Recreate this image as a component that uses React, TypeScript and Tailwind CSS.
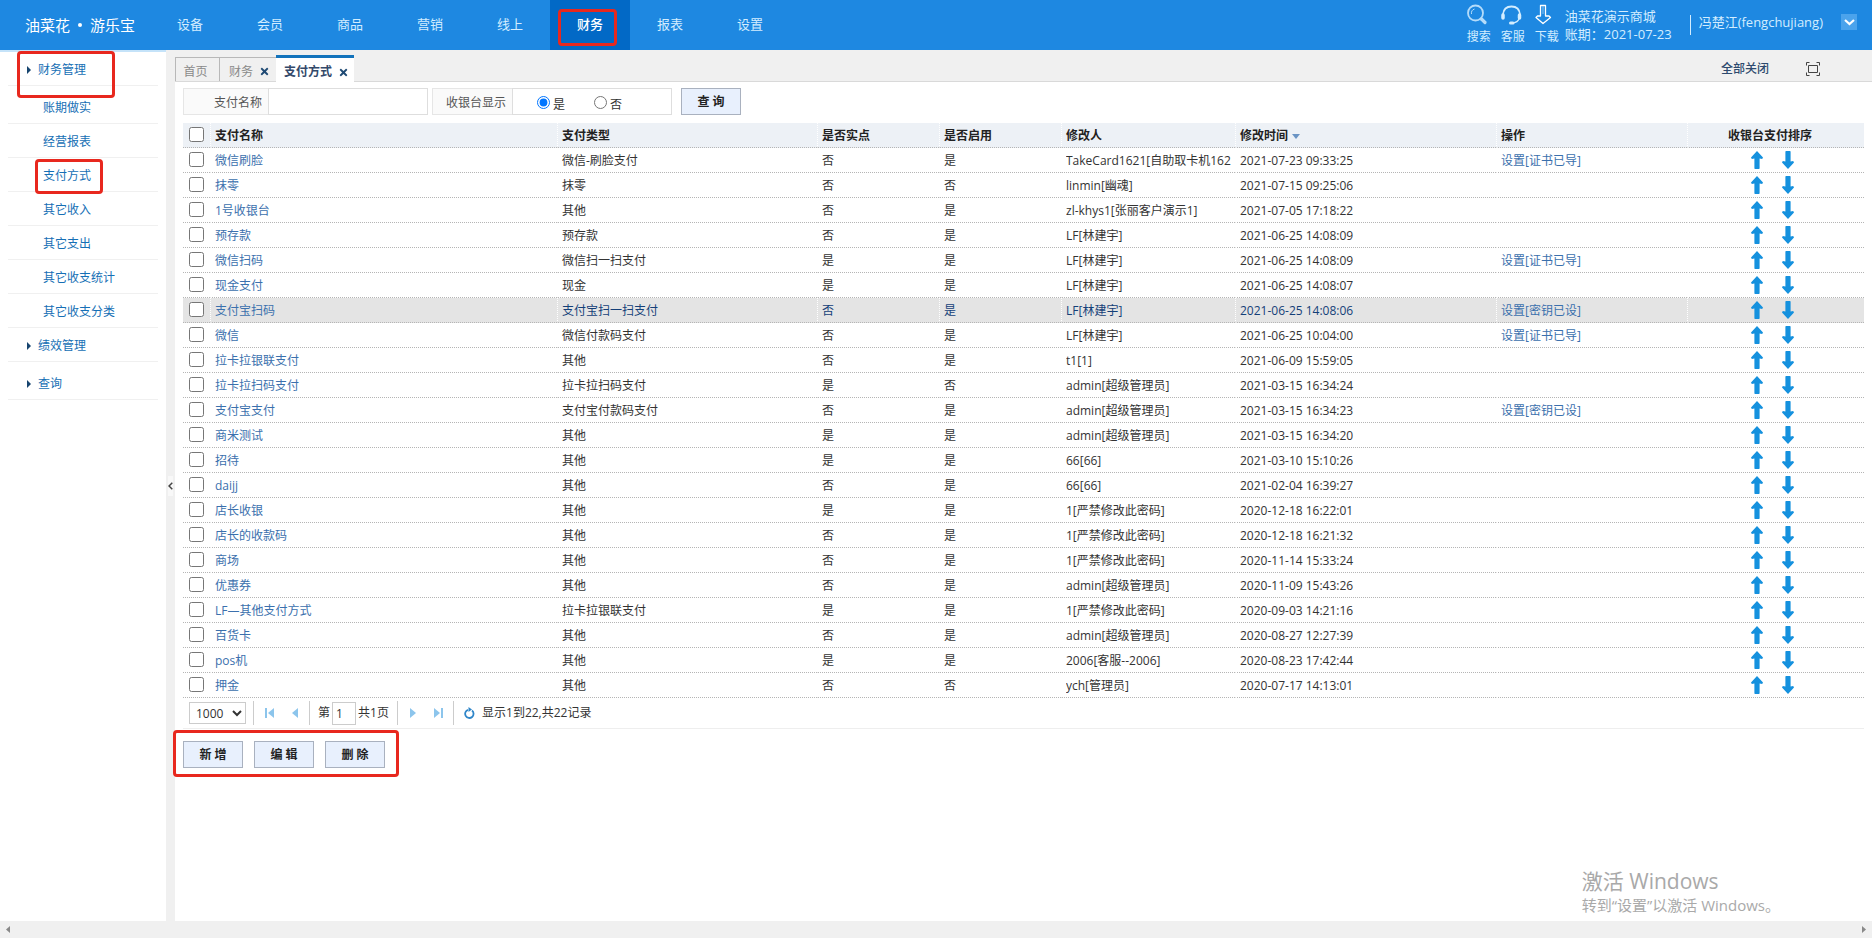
import type { ReactNode } from "react";
import { FaTimes } from "react-icons/fa";

type Row = {
  name: string;
  type: string;
  counted: string;
  enabled: string;
  user: string;
  time: string;
  action?: string;
  active?: boolean;
};

const NAV = ["设备", "会员", "商品", "营销", "线上", "财务", "报表", "设置"];

const MENU = [
  { label: "财务管理", parent: true },
  { label: "账期做实", tall: true },
  { label: "经营报表" },
  { label: "支付方式", marked: true },
  { label: "其它收入" },
  { label: "其它支出" },
  { label: "其它收支统计" },
  { label: "其它收支分类" },
  { label: "绩效管理", parent: true },
  { label: "查询", parent: true, tall: true },
];

const ROWS: Row[] = [
  { name: "微信刷脸", type: "微信-刷脸支付", counted: "否", enabled: "是", user: "TakeCard1621[自助取卡机1621]", time: "2021-07-23 09:33:25", action: "设置[证书已导]" },
  { name: "抹零", type: "抹零", counted: "否", enabled: "否", user: "linmin[幽魂]", time: "2021-07-15 09:25:06" },
  { name: "1号收银台", type: "其他", counted: "否", enabled: "是", user: "zl-khys1[张丽客户演示1]", time: "2021-07-05 17:18:22" },
  { name: "预存款", type: "预存款", counted: "否", enabled: "是", user: "LF[林建宇]", time: "2021-06-25 14:08:09" },
  { name: "微信扫码", type: "微信扫一扫支付", counted: "是", enabled: "是", user: "LF[林建宇]", time: "2021-06-25 14:08:09", action: "设置[证书已导]" },
  { name: "现金支付", type: "现金", counted: "是", enabled: "是", user: "LF[林建宇]", time: "2021-06-25 14:08:07" },
  { name: "支付宝扫码", type: "支付宝扫一扫支付", counted: "否", enabled: "是", user: "LF[林建宇]", time: "2021-06-25 14:08:06", action: "设置[密钥已设]", active: true },
  { name: "微信", type: "微信付款码支付", counted: "否", enabled: "是", user: "LF[林建宇]", time: "2021-06-25 10:04:00", action: "设置[证书已导]" },
  { name: "拉卡拉银联支付", type: "其他", counted: "否", enabled: "是", user: "t1[1]", time: "2021-06-09 15:59:05" },
  { name: "拉卡拉扫码支付", type: "拉卡拉扫码支付", counted: "是", enabled: "否", user: "admin[超级管理员]", time: "2021-03-15 16:34:24" },
  { name: "支付宝支付", type: "支付宝付款码支付", counted: "否", enabled: "是", user: "admin[超级管理员]", time: "2021-03-15 16:34:23", action: "设置[密钥已设]" },
  { name: "商米测试", type: "其他", counted: "是", enabled: "是", user: "admin[超级管理员]", time: "2021-03-15 16:34:20" },
  { name: "招待", type: "其他", counted: "是", enabled: "是", user: "66[66]", time: "2021-03-10 15:10:26" },
  { name: "daijj", type: "其他", counted: "否", enabled: "是", user: "66[66]", time: "2021-02-04 16:39:27" },
  { name: "店长收银", type: "其他", counted: "是", enabled: "是", user: "1[严禁修改此密码]", time: "2020-12-18 16:22:01" },
  { name: "店长的收款码", type: "其他", counted: "否", enabled: "是", user: "1[严禁修改此密码]", time: "2020-12-18 16:21:32" },
  { name: "商场", type: "其他", counted: "否", enabled: "是", user: "1[严禁修改此密码]", time: "2020-11-14 15:33:24" },
  { name: "优惠券", type: "其他", counted: "否", enabled: "是", user: "admin[超级管理员]", time: "2020-11-09 15:43:26" },
  { name: "LF—其他支付方式", type: "拉卡拉银联支付", counted: "是", enabled: "是", user: "1[严禁修改此密码]", time: "2020-09-03 14:21:16" },
  { name: "百货卡", type: "其他", counted: "否", enabled: "是", user: "admin[超级管理员]", time: "2020-08-27 12:27:39" },
  { name: "pos机", type: "其他", counted: "是", enabled: "是", user: "2006[客服--2006]", time: "2020-08-23 17:42:44" },
  { name: "押金", type: "其他", counted: "否", enabled: "否", user: "ych[管理员]", time: "2020-07-17 14:13:01" },
];

// red callout drawn over whatever it wraps
function Mark({ className }: { className: string }) {
  return <span className={`pointer-events-none absolute z-10 rounded-sm border-3 border-[#e8281e] ${className}`} />;
}

function ActionButton({ children }: { children: ReactNode }) {
  return (
    <button type="button" className="h-[27px] w-[60px] border border-[#a9b1bf] bg-[#e8f0fd] text-xs font-bold text-[#222]">
      {children}
    </button>
  );
}

function Arrow({ down = false }: { down?: boolean }) {
  return (
    <svg width="12" height="18" viewBox="0 0 12 18" fill="#1591de" className={down ? "rotate-180" : ""}>
      <path d="M6 0 12 6.600 11.200 8 8.600 7.400V17.400L8 18H4L3.400 17.400V7.400L.8 8 0 6.600Z" />
    </svg>
  );
}

function Header() {
  return (
    <header className="flex h-[50px] shrink-0 items-stretch bg-[#1e88e1] text-[13px] text-[#d3edff]">
      <div className="flex w-[150px] shrink-0 items-center gap-2 pl-[25px] text-[15px] text-white">
        <span>油菜花</span>
        <span className="size-1 rounded-full bg-white" />
        <span>游乐宝</span>
      </div>
      <nav className="flex">
        {NAV.map((n) => (
          <a
            key={n}
            href="#"
            className={n === "财务" ? "relative flex w-20 items-center justify-center bg-[#0269c6] font-medium text-white" : "flex w-20 items-center justify-center"}
          >
            {n}
            {n === "财务" && <Mark className="top-[9px] left-2 h-[37px] w-[59px]" />}
          </a>
        ))}
      </nav>
      <div className="ml-auto flex pr-[15px]">
        <div className="flex gap-[10px] pt-1 text-xs leading-4">
          <a href="#" className="flex w-6 flex-col items-start gap-[3px]">
            <svg width="22" height="22" viewBox="0 0 22 22" fill="none" stroke="#b5dcfa">
              <circle cx="8.500" cy="9" r="7.500" strokeWidth="1.800" />
              <path d="M4.500 10a4.500 4.500 0 0 1 3-5" />
              <path d="m14.500 15 3.500 3.500" strokeWidth="3.200" strokeLinecap="round" />
            </svg>
            搜索
          </a>
          <a href="#" className="flex w-6 flex-col items-start gap-[3px]">
            <svg width="22" height="22" viewBox="0 0 22 22" fill="none" stroke="#d3edff">
              <path d="M2 10.500C2.500 5 6 2.500 10.500 2.500S18.500 5 19 10.500" strokeWidth="1.800" />
              <path d="M2 11v3M18.500 11v3" strokeWidth="3.500" strokeLinecap="round" />
              <path d="M18 15c-1 2.500-3 3.500-6 4" strokeWidth="1.300" />
              <path d="M9.500 19h2.500" strokeWidth="3" strokeLinecap="round" />
            </svg>
            客服
          </a>
          <a href="#" className="flex w-6 flex-col items-start gap-[3px]">
            <svg width="22" height="22" viewBox="0 0 22 22" fill="none" stroke="#fff" strokeWidth="1.300" strokeLinejoin="round">
              <path d="M5.500 1.500h5V12H14l1.500 1.500-7.500 6-7-6L2.500 12h3Z" />
              <path d="M8 2v8" stroke="#8cc5f2" strokeWidth="1" />
            </svg>
            下载
          </a>
        </div>
        <div className="flex flex-col justify-center pl-[6px] leading-[18px]">
          <span>油菜花演示商城</span>
          <span>账期：2021-07-23</span>
        </div>
        <div className="mt-[15px] ml-[18px] h-5 w-px bg-[#d3edff]" />
        <span className="ml-2 leading-[44px]">冯楚江(fengchujiang)</span>
        <button type="button" aria-label="展开" className="mt-[14px] ml-[18px] flex size-4 items-center justify-center bg-[#4ba3ec]">
          <svg width="11" height="7" viewBox="0 0 11 7" fill="none" stroke="#fff" strokeWidth="2.200">
            <path d="m1 1 4.500 4L10 1" />
          </svg>
        </button>
      </div>
    </header>
  );
}

function Sidebar() {
  return (
    <aside className="relative w-[166px] shrink-0 border-t-2 border-[#c5e3f9] bg-white">
      <Mark className="-top-px left-[17px] h-[47px] w-[98px]" />
      <ul className="px-2">
        {MENU.map((m) => (
          <li key={m.label} className={`relative border-b border-[#f0f0f0] ${m.tall ? "h-[38px] pt-1" : "h-[34px]"}`}>
            <a href="#" className={`flex h-full items-center pt-[3px] text-xs text-[#166fb5] ${m.parent ? "gap-[7px] pl-[19px]" : "pl-[35px]"}`}>
              {m.parent && (
                <svg width="4" height="8" viewBox="0 0 4 8" fill="#17456f">
                  <path d="M0 0 4 4 0 8Z" />
                </svg>
              )}
              {m.label}
            </a>
            {m.marked && <Mark className="top-px left-[27px] h-[35px] w-[68px]" />}
          </li>
        ))}
      </ul>
    </aside>
  );
}

function Tabs() {
  return (
    <div className="flex h-8 items-end border-b border-[#d9d9d9] bg-[#f0f0f0] text-xs">
      <a href="#" className="flex h-6 w-[45px] items-center justify-center border border-b-0 border-[#b8b8b8] pt-1 pr-1 text-[#8a8a8a]">首页</a>
      <a href="#" className="flex h-6 w-14 items-center gap-[6px] border-t border-[#b8b8b8] pt-1 pl-[9px] text-[#8a8a8a]">
        财务
        <FaTimes size={11} color="#1f4a74" />
      </a>
      <a href="#" className="-mb-px flex h-[27px] w-[78px] items-center gap-[6px] border-t-3 border-[#1373bb] bg-white pt-1 pl-2 font-bold text-[#33496a]">
        <span className="shrink-0">支付方式</span>
        <FaTimes size={11} color="#1f4a74" />
      </a>
      <div className="ml-auto flex h-full items-center gap-[37px] pr-[52px] pt-[6px]">
        <a href="#" className="font-medium text-[#2d4a6e]">全部关闭</a>
        <button type="button" aria-label="全屏">
          <svg width="14" height="14" viewBox="0 0 14 14" fill="none" stroke="#444">
            <path d="M.5 3.500v-3h3M10.500.5h3v3M13.500 10.500v3h-3M3.500 13.500h-3v-3M2.500 3.500h9v7h-9Z" />
          </svg>
        </button>
      </div>
    </div>
  );
}

function SearchForm() {
  return (
    <form className="flex h-[27px] items-stretch text-xs text-[#555]" onSubmit={(e) => e.preventDefault()}>
      <label htmlFor="payName" className="flex w-[85px] items-center justify-end border border-r-0 border-[#e6e6e6] bg-[#fafafa] pt-[2px] pr-[6px]">
        支付名称
      </label>
      <input id="payName" type="text" className="w-40 border border-[#dedede] px-2 outline-none" />
      <div role="radiogroup" aria-labelledby="showLabel" className="ml-1 flex">
        <div id="showLabel" className="flex w-20 items-center justify-end border border-r-0 border-[#e6e6e6] bg-[#fafafa] pt-[2px] pr-[6px]">收银台显示</div>
        <div className="flex w-40 items-center border border-[#dedede] pt-[6px] pl-6 text-[#333]">
          <label className="flex w-[57px] items-center gap-[3px]">
            <input type="radio" name="show" defaultChecked className="mb-1 size-[13px]" />是
          </label>
          <label className="flex items-center gap-[3px]">
            <input type="radio" name="show" className="mb-1 size-[13px]" />否
          </label>
        </div>
      </div>
      <div className="ml-[9px]">
        <ActionButton>查 询</ActionButton>
      </div>
    </form>
  );
}

function PayTable() {
  const base = "truncate border-b border-dotted border-b-[#b5b5b5] border-l border-l-white px-1";
  const cell = `${base} pt-[2px]`;
  const box = "border-b border-dotted border-[#b5b5b5] pb-px pl-[6px]";
  return (
    <table className="mt-2 w-full table-fixed border-separate border-spacing-0 text-left text-xs text-[#333]">
      <colgroup>
        <col className="w-[27px]" />
        <col className="w-[347px]" />
        <col className="w-[260px]" />
        <col className="w-[122px]" />
        <col className="w-[122px]" />
        <col className="w-[174px]" />
        <col className="w-[261px]" />
        <col className="w-[191px]" />
        <col className="w-[177px]" />
      </colgroup>
      <thead>
        <tr className="h-[25px] bg-[#edf1f6] text-[#222]">
          <th className={box}>
            <input type="checkbox" aria-label="全选" className="block size-[15px]" />
          </th>
          <th className={cell}>支付名称</th>
          <th className={cell}>支付类型</th>
          <th className={cell}>是否实点</th>
          <th className={cell}>是否启用</th>
          <th className={cell}>修改人</th>
          <th className={cell}>
            修改时间
            <svg width="8" height="5" viewBox="0 0 8 5" fill="#6a94c4" className="ml-1 inline-block align-middle">
              <path d="M0 0h8L4 5Z" />
            </svg>
          </th>
          <th className={cell}>操作</th>
          <th className={`${cell} text-center`}><span className="pr-3">收银台支付排序</span></th>
        </tr>
      </thead>
      <tbody>
        {ROWS.map((r) => (
          <tr key={r.name} className={r.active ? "h-[25px] bg-[#e4e4e4] text-[#143f78]" : "h-[25px]"}>
            <td className={box}>
              <input type="checkbox" aria-label={r.name} className="block size-[15px]" />
            </td>
            <td className={cell}><a href="#" className="text-[#3b70ad]">{r.name}</a></td>
            <td className={cell}>{r.type}</td>
            <td className={cell}>{r.counted}</td>
            <td className={cell}>{r.enabled}</td>
            <td className={cell}><div className="overflow-hidden">{r.user}</div></td>
            <td className={cell}>{r.time}</td>
            <td className={cell}>{r.action && <a href="#" className="text-[#3b70ad]">{r.action}</a>}</td>
            <td className={base}>
              <div className="flex justify-center gap-[19px] pr-2">
                <button type="button" aria-label="上移"><Arrow /></button>
                <button type="button" aria-label="下移"><Arrow down /></button>
              </div>
            </td>
          </tr>
        ))}
      </tbody>
    </table>
  );
}

function PageIcon({ flip = false, bar = false }: { flip?: boolean; bar?: boolean }) {
  return (
    <svg width={bar ? 9 : 6} height="10" viewBox={bar ? "0 0 9 10" : "3 0 6 10"} fill="#8cc5ec" className={flip ? "rotate-180" : ""}>
      {bar && <path d="M0 0h2v10H0Z" />}
      <path d="M9 0v10L3 5Z" />
    </svg>
  );
}

function Pager() {
  const divider = "h-6 w-px bg-[#ccc]";
  return (
    <div className="flex h-[31px] items-center border-b border-[#eee] pl-[6px] text-xs text-[#333]">
      <select aria-label="每页条数" className="h-[22px] w-[57px] border border-[#ccc] bg-white pl-[2px] text-xs">
        <option>1000</option>
      </select>
      <span className={`ml-[7px] ${divider}`} />
      <button type="button" aria-label="首页" className="ml-[11px]"><PageIcon bar /></button>
      <button type="button" aria-label="上一页" className="ml-[18px]"><PageIcon /></button>
      <span className={`ml-[11px] ${divider}`} />
      <label htmlFor="page" className="ml-2">第</label>
      <input id="page" type="text" defaultValue="1" className="ml-[2px] h-[23px] w-6 border border-[#ccc] pl-[3px]" />
      <span className="ml-[2px] w-[31px] whitespace-nowrap">共1页</span>
      <span className={`ml-2 ${divider}`} />
      <button type="button" aria-label="下一页" className="ml-[12px]"><PageIcon flip /></button>
      <button type="button" aria-label="末页" className="ml-[18px]"><PageIcon flip bar /></button>
      <span className={`ml-[10px] ${divider}`} />
      <button type="button" aria-label="刷新" className="ml-[10px]">
        <svg width="11" height="12" viewBox="0 0 11 12" fill="none" stroke="#2f86c9" strokeWidth="1.800">
          <path d="M4 2.800A4.200 4.200 0 1 0 8 3.500" />
          <path d="M4.500 0v5L8 2.500Z" fill="#2f86c9" stroke="none" />
        </svg>
      </button>
      <span className="ml-[7px]">显示1到22,共22记录</span>
    </div>
  );
}

export default function App() {
  return (
    <div className="flex min-h-screen flex-col bg-white font-['Open_Sans','Noto_Sans_CJK_SC',sans-serif]">
      <Header />
      <div className="flex flex-1 items-stretch">
        <Sidebar />
        <div className="flex w-[9px] shrink-0 items-center justify-center bg-[#f0f0f0]">
          <button type="button" aria-label="收起" className="flex h-5 items-center bg-[#f8f8f8]">
            <svg width="5" height="8" viewBox="0 0 5 8" fill="none" stroke="#444" strokeWidth="1.500">
              <path d="M4.300.7 1 4l3.300 3.300" />
            </svg>
          </button>
        </div>
        <main className="flex min-w-0 flex-1 flex-col">
          <Tabs />
          <div className="px-2 pt-[6px]">
            <SearchForm />
            <PayTable />
            <Pager />
            <div className="relative mt-3 flex w-fit gap-[11px]">
              <ActionButton>新 增</ActionButton>
              <ActionButton>编 辑</ActionButton>
              <ActionButton>删 除</ActionButton>
              <Mark className="-top-[11px] -left-[10px] h-[47px] w-[226px]" />
            </div>
          </div>
          <div className="mt-auto mr-[92px] mb-[6px] self-end text-[#a9a9a9]">
            <p className="text-[21px] leading-7">激活 Windows</p>
            <p className="text-[15px] leading-5">转到“设置”以激活 Windows。</p>
          </div>
        </main>
      </div>
      <footer className="flex h-[17px] shrink-0 items-center justify-between bg-[#f0f0f0] px-[6px]">
        <svg width="4" height="7" viewBox="0 0 4 7" fill="#888"><path d="M4 0v7L0 3.500Z" /></svg>
        <svg width="4" height="7" viewBox="0 0 4 7" fill="#888"><path d="M0 0v7l4-3.500Z" /></svg>
      </footer>
    </div>
  );
}
